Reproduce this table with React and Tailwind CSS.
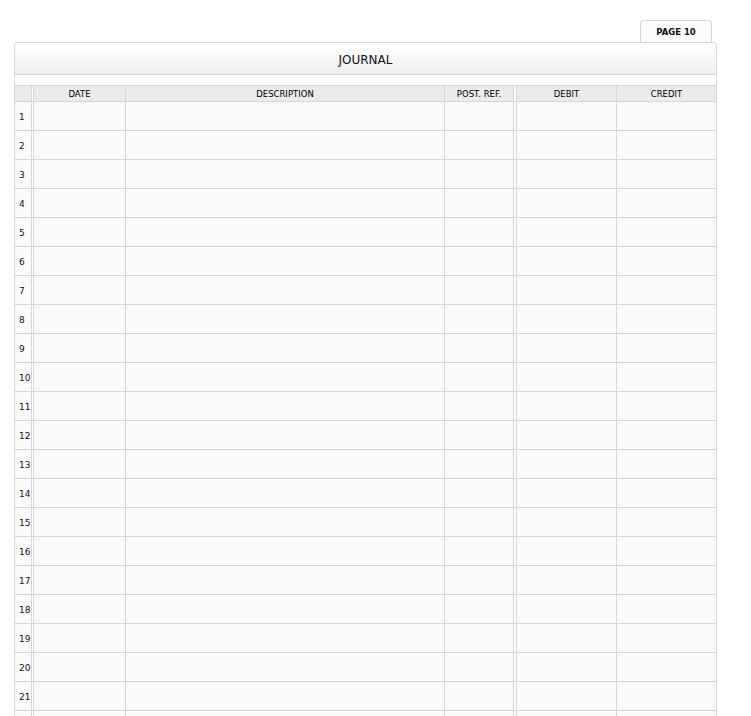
const rows = Array.from({ length: 22 }, (_, i) => i + 1);

const font = "font-['Tahoma','DejaVu_Sans','Verdana',sans-serif]";

function Row({ n }) {
  return (
    <div className="flex h-[29px] border-b border-[#d6d6d6] bg-[#fafafa]">
      <div className="w-[17px] border-r border-[#d6d6d6] flex items-center pl-[4px] pt-[3px] text-[9px] text-[#10102a]">
        {n <= 21 ? n : ""}
      </div>
      <div className="w-[1px] bg-white" />
      <div className="w-[93px] border-l border-r border-[#d6d6d6]" />
      <div className="w-[319px] border-r border-[#d6d6d6]" />
      <div className="w-[69px] border-r border-[#d6d6d6]" />
      <div className="w-[2px] bg-white" />
      <div className="w-[101px] border-l border-r border-[#d6d6d6]" />
      <div className="flex-1" />
    </div>
  );
}

export default function App() {
  return (
    <div className={`min-h-[716px] bg-white pt-[20px] pl-[14px] ${font}`}>
      <div className="w-[703px]">
        <div className="flex justify-end pr-[5px]">
          <div className="w-[72px] h-[22px] border border-b-0 border-[#d6d6d6] rounded-t-[4px] bg-[#fcfcfc] flex items-center justify-center pt-[1px] text-[8.5px] font-bold text-[#111]">
            PAGE 10
          </div>
        </div>
        <div className="border border-[#d6d6d6] rounded-t-[4px] border-b-0 overflow-hidden">
          <div className="h-[32px] border-b border-[#d6d6d6] bg-gradient-to-b from-white to-[#efefef] flex items-center justify-center pt-[2px] text-[12px] text-[#111]">
            JOURNAL
          </div>
          <div className="h-[11px] bg-white border-b border-[#d6d6d6]" />
          <div className="flex h-[16px] border-b border-[#d6d6d6] bg-[#ebebeb] text-[8.5px] text-black">
            <div className="w-[17px] border-r border-[#d6d6d6]" />
            <div className="w-[1px] bg-white" />
            <div className="w-[93px] border-l border-r border-[#d6d6d6] flex items-center justify-center pt-[1px]">DATE</div>
            <div className="w-[319px] border-r border-[#d6d6d6] flex items-center justify-center pt-[1px]">DESCRIPTION</div>
            <div className="w-[69px] border-r border-[#d6d6d6] flex items-center justify-center pt-[1px]">POST. REF.</div>
            <div className="w-[2px] bg-white" />
            <div className="w-[101px] border-l border-r border-[#d6d6d6] flex items-center justify-center pt-[1px]">DEBIT</div>
            <div className="flex-1 flex items-center justify-center pt-[1px]">CREDIT</div>
          </div>
          {rows.map(n => (
            <Row key={n} n={n} />
          ))}
        </div>
      </div>
    </div>
  );
}
